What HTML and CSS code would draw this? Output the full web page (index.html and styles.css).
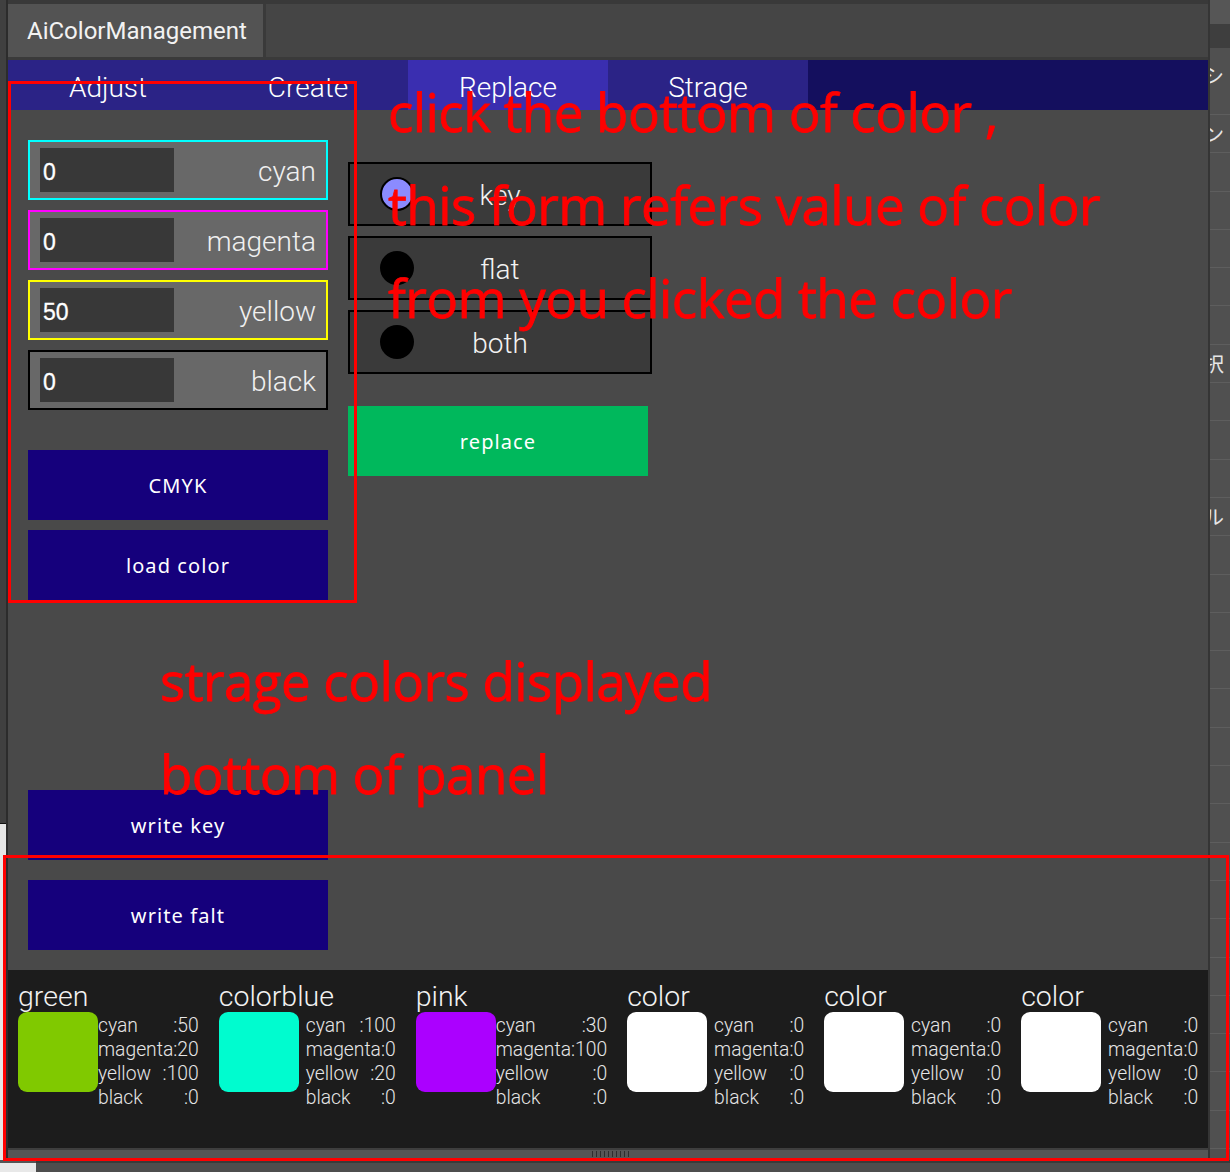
FILE: index.html
```html
<!DOCTYPE html>
<html>
<head>
<meta charset="utf-8">
<link rel="stylesheet" href="styles.css">
</head>
<body>
<div class="screen">
  <div class="main-row">
    <div class="left-strip"><div class="ls-top"></div><div class="ls-bottom"></div></div>
    <div class="window">
      <div class="tabbar">
        <div class="title-tab">AiColorManagement</div>
        <div class="tab-rest"></div>
      </div>
      <nav class="nav">
        <div class="nav-tab">Adjust</div>
        <div class="nav-tab">Create</div>
        <div class="nav-tab active">Replace</div>
        <div class="nav-tab">Strage</div>
        <div class="nav-fill"></div>
      </nav>
      <div class="content">
        <div class="col-left">
          <div class="field f-cyan"><div class="num">0</div><span class="lbl">cyan</span></div>
          <div class="field f-magenta"><div class="num">0</div><span class="lbl">magenta</span></div>
          <div class="field f-yellow"><div class="num">50</div><span class="lbl">yellow</span></div>
          <div class="field f-black"><div class="num">0</div><span class="lbl">black</span></div>
          <div class="btn btn-cmyk">CMYK</div>
          <div class="btn">load color</div>
          <div class="btn btn-push">write key</div>
          <div class="btn btn-falt">write falt</div>
        </div>
        <div class="col-right">
          <div class="radio"><span class="dot on"></span><span class="rlbl">key</span></div>
          <div class="radio"><span class="dot"></span><span class="rlbl">flat</span></div>
          <div class="radio"><span class="dot"></span><span class="rlbl">both</span></div>
          <div class="replace">replace</div>
        </div>
      </div>
      <div class="storage">
        <div class="item">
          <div class="iname">green</div>
          <div class="irow"><div class="sw sw-green"></div>
            <div class="vals"><div class="vl"><span>cyan</span><span>:50</span></div><div class="vl"><span>magenta</span><span>:20</span></div><div class="vl"><span>yellow</span><span>:100</span></div><div class="vl"><span>black</span><span>:0</span></div></div>
          </div>
        </div>
        <div class="item">
          <div class="iname">colorblue</div>
          <div class="irow"><div class="sw sw-blue"></div>
            <div class="vals"><div class="vl"><span>cyan</span><span>:100</span></div><div class="vl"><span>magenta</span><span>:0</span></div><div class="vl"><span>yellow</span><span>:20</span></div><div class="vl"><span>black</span><span>:0</span></div></div>
          </div>
        </div>
        <div class="item">
          <div class="iname">pink</div>
          <div class="irow"><div class="sw sw-pink"></div>
            <div class="vals"><div class="vl"><span>cyan</span><span>:30</span></div><div class="vl"><span>magenta</span><span>:100</span></div><div class="vl"><span>yellow</span><span>:0</span></div><div class="vl"><span>black</span><span>:0</span></div></div>
          </div>
        </div>
        <div class="item">
          <div class="iname">color</div>
          <div class="irow"><div class="sw"></div>
            <div class="vals"><div class="vl"><span>cyan</span><span>:0</span></div><div class="vl"><span>magenta</span><span>:0</span></div><div class="vl"><span>yellow</span><span>:0</span></div><div class="vl"><span>black</span><span>:0</span></div></div>
          </div>
        </div>
        <div class="item">
          <div class="iname">color</div>
          <div class="irow"><div class="sw"></div>
            <div class="vals"><div class="vl"><span>cyan</span><span>:0</span></div><div class="vl"><span>magenta</span><span>:0</span></div><div class="vl"><span>yellow</span><span>:0</span></div><div class="vl"><span>black</span><span>:0</span></div></div>
          </div>
        </div>
        <div class="item">
          <div class="iname">color</div>
          <div class="irow"><div class="sw"></div>
            <div class="vals"><div class="vl"><span>cyan</span><span>:0</span></div><div class="vl"><span>magenta</span><span>:0</span></div><div class="vl"><span>yellow</span><span>:0</span></div><div class="vl"><span>black</span><span>:0</span></div></div>
          </div>
        </div>
      </div>
      <div class="grip"><span class="grip-mark"></span></div>
    </div>
    <div class="right-strip">
      <div class="rs-top"></div>
      <div class="rs-dark"></div>
      <div class="rs-row rs-first"><span class="rs-ch">シ</span></div>
      <div class="rs-row"><span class="rs-ch">ン</span></div>
      <div class="rs-row"></div>
      <div class="rs-row"></div>
      <div class="rs-row"></div>
      <div class="rs-row"></div>
      <div class="rs-row"></div>
      <div class="rs-row"><span class="rs-ch">択</span></div>
      <div class="rs-row"></div>
      <div class="rs-row"></div>
      <div class="rs-row"></div>
      <div class="rs-row"><span class="rs-ch">ル</span></div>
      <div class="rs-row"></div>
      <div class="rs-row"></div>
      <div class="rs-row"></div>
      <div class="rs-row"></div>
      <div class="rs-row"></div>
      <div class="rs-row"></div>
      <div class="rs-row"></div>
      <div class="rs-row"></div>
      <div class="rs-row"></div>
      <div class="rs-row"></div>
      <div class="rs-row"></div>
      <div class="rs-row"></div>
      <div class="rs-row"></div>
      <div class="rs-row"></div>
      <div class="rs-row"></div>
      <div class="rs-row"></div>
    </div>
  </div>
  <div class="bottom-strip"><div class="bs-white"></div><div class="bs-gray"></div></div>

  <div class="anno-rect rect-a"></div>
  <div class="anno-rect rect-b"></div>
  <div class="anno-text text-a">click the bottom of color ,<br>this form refers value of color<br>from you clicked the color</div>
  <div class="anno-text text-b">strage colors displayed<br>bottom of panel</div>
</div>
</body>
</html>
```

FILE: styles.css
```css
* { box-sizing: border-box; }
html, body { margin: 0; padding: 0; background: #3c3c3c; }
.screen {
  position: relative;
  width: 1230px;
  height: 1172px;
  overflow: hidden;
  display: flex;
  flex-direction: column;
  font-family: Roboto, "Liberation Sans", sans-serif;
}
.main-row { display: flex; height: 1160px; }

.left-strip {
  width: 8px;
  display: flex;
  flex-direction: column;
  border-right: 2px solid #2c2c2c;
}
.ls-top { height: 823px; background: #404040; }
.ls-bottom { flex: 1; background: #e6e6e6; border-top: 1px solid #111; }

.window {
  width: 1200px;
  display: flex;
  flex-direction: column;
  border-top: 4px solid #393939;
}
.tabbar {
  height: 56px;
  display: flex;
  border-bottom: 3px solid #3a3a3a;
}
.title-tab {
  width: 255px;
  background: #535353;
  color: #f2f2f2;
  font-size: 24px;
  padding-left: 19px;
  display: flex;
  align-items: center;
}
.tab-rest {
  flex: 1;
  background: #454545;
  border-left: 3px solid #3a3a3a;
}

.nav { height: 50px; display: flex; }
.nav-tab {
  width: 200px;
  background: #2b2386;
  color: #fff;
  font-weight: 300;
  font-size: 28px;
  text-align: center;
  line-height: 50px;
  padding-top: 3px;
}
.nav-tab.active { background: #3a2eb0; }
.nav-fill { flex: 1; background: #140f5e; }

.content {
  height: 860px;
  background: #494949;
  padding: 30px 0 20px 20px;
  display: flex;
  gap: 20px;
}
.col-left { width: 300px; display: flex; flex-direction: column; gap: 10px; }
.field {
  height: 60px;
  border: 2px solid;
  background: #686868;
  padding: 6px 10px 6px 10px;
  display: flex;
  align-items: center;
  justify-content: space-between;
}
.f-cyan { border-color: #00ffff; }
.f-magenta { border-color: #ff00ff; }
.f-yellow { border-color: #ffff00; }
.f-black { border-color: #000; }
.num {
  width: 134px;
  height: 44px;
  background: #383838;
  color: #fff;
  font-family: "Liberation Sans", sans-serif;
  font-size: 23px;
  line-height: 48px;
  padding-left: 3px;
  -webkit-text-stroke: 0.3px #fff;
}
.lbl { color: #f0f0f0; font-weight: 300; font-size: 28px; padding-top: 2px; }

.btn {
  height: 70px;
  background: #15007c;
  color: #fff;
  font-family: "Noto Sans", sans-serif;
  font-size: 20px;
  letter-spacing: 1.1px;
  display: flex;
  align-items: center;
  justify-content: center;
}
.btn-cmyk { margin-top: 30px; }
.btn-push { margin-top: auto; }
.btn-falt { margin-top: 10px; }

.col-right { width: 304px; padding-top: 22px; display: flex; flex-direction: column; gap: 10px; }
.radio {
  height: 64px;
  border: 2px solid #000;
  background: #3a3a3a;
  display: grid;
  grid-template-columns: 30px 34px 1fr 64px;
  align-items: center;
}
.dot {
  grid-column: 2;
  width: 34px;
  height: 34px;
  border-radius: 50%;
  background: #000;
}
.dot.on { background: #8b8bff; border: 2px solid #000; }
.rlbl {
  grid-column: 3;
  text-align: center;
  color: #f2f2f2;
  font-weight: 300;
  font-size: 28px;
  padding-top: 3px;
}
.replace {
  margin-top: 22px;
  width: 300px;
  height: 70px;
  background: #00b85c;
  color: #fff;
  font-family: "Noto Sans", sans-serif;
  font-size: 20px;
  letter-spacing: 1.1px;
  display: flex;
  align-items: center;
  justify-content: center;
}

.storage {
  height: 178px;
  background: #1c1c1c;
  padding: 12px 10px 0 10px;
  display: flex;
  gap: 20px;
}
.iname {
  color: #f2f2f2;
  font-weight: 300;
  font-size: 28.5px;
  line-height: 30px;
}
.irow { display: flex; justify-content: space-between; min-width: 177px; }
.sw { width: 80px; height: 80px; border-radius: 9px; background: #fff; }
.sw-green { background: #80c900; }
.sw-blue { background: #00fccf; }
.sw-pink { background: #ab00ff; }
.vals {
  color: #e6e6e6;
  font-weight: 300;
  font-size: 19.3px;
  line-height: 24px;
  padding-top: 2px;
}
.vl { display: flex; justify-content: space-between; }

.grip {
  height: 12px;
  background: #565656;
  border-top: 2px solid #3e3e3e;
  border-bottom: 2px solid #4a4a4a;
  display: flex;
  justify-content: center;
  align-items: center;
}
.grip-mark {
  width: 38px;
  height: 6px;
  margin-left: 6px;
  background: repeating-linear-gradient(90deg, #2e2e2e 0 1px, transparent 1px 4px);
}

.right-strip {
  width: 22px;
  background: #505050;
  border-left: 2px solid #353535;
  display: flex;
  flex-direction: column;
  overflow: hidden;
}
.rs-top { height: 24px; background: #565656; flex: none; }
.rs-dark { height: 24px; background: #3e3e3e; flex: none; }
.rs-row {
  flex: none;
  height: 38.3px;
  border-bottom: 1px solid #5e5e5e;
  color: #e6e6e6;
  font-family: "Noto Sans CJK JP", sans-serif;
  font-size: 20px;
  line-height: 38px;
  white-space: nowrap;
}
.rs-first { height: 67px; line-height: 56px; }
.rs-ch { display: block; margin-left: -6px; }

.bottom-strip { height: 12px; display: flex; }
.bs-white { width: 36px; background: #e8e8e8; border-top: 3px solid #555; }
.bs-gray { flex: 1; background: #4d4d4d; border-top: 3px solid #3a3a3a; }

.anno-rect {
  position: absolute;
  border: 3px solid #ff0000;
}
.rect-a { left: 8px; top: 81px; width: 349px; height: 522px; }
.rect-b { left: 3px; top: 855px; width: 1226px; height: 306px; }
.anno-text {
  position: absolute;
  color: #ff0000;
  font-family: "Open Sans", sans-serif;
  font-size: 53px;
  line-height: 93px;
  white-space: nowrap;
  -webkit-text-stroke: 0.8px #ff0000;
  letter-spacing: -0.6px;
}
.text-a { left: 388px; top: 65px; }
.text-b { left: 160px; top: 634px; }
```
